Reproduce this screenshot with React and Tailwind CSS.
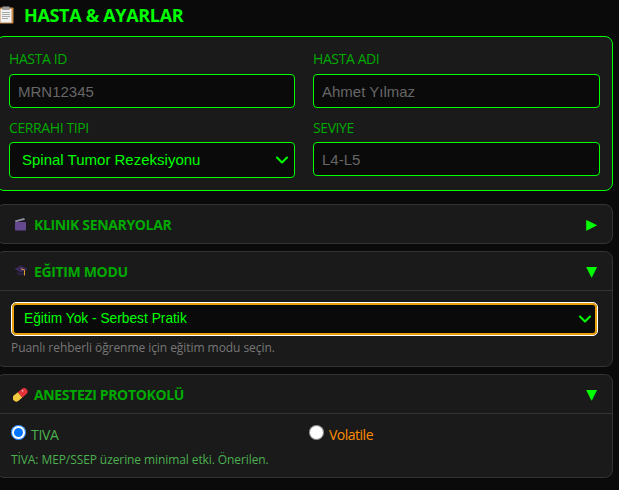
import React from "react";
import { ChevronDown } from "lucide-react";

const segoe = "font-['Open_Sans',sans-serif]";
const arial = "font-['Liberation_Sans',sans-serif]";

const ClipboardIcon = () => (
  <svg width="16" height="18" viewBox="0 0 16 18" className="shrink-0">
    <rect x="0.5" y="1.5" width="15" height="16" rx="1" fill="#c98a4b" />
    <rect x="2.5" y="3" width="11" height="13.5" fill="#f2f2f2" />
    <rect x="4.5" y="0.5" width="7" height="3.5" fill="#9a9a9a" />
    <path d="M4 6.5h8M4 8.5h8M4 10.5h8M4 12.5h6" stroke="#a9a9a9" strokeWidth="1" />
  </svg>
);

const ClapperIcon = () => (
  <svg width="13" height="14" viewBox="0 0 13 14" className="shrink-0">
    <rect x="1" y="5" width="11" height="8.5" rx="1" fill="#64498f" />
    <path d="M1 3.5L10 1l1 1.8L1.5 5.2z" fill="#8f8fa3" />
  </svg>
);

const CapIcon = () => (
  <svg width="14" height="14" viewBox="0 0 14 14" className="shrink-0">
    <path d="M0.5 5L7 1.5 13.5 5 7 8.5z" fill="#3c2a5e" />
    <path d="M3 7.5v2.5c2 1.8 6 1.8 8 0V7.5L7 9.5z" fill="#2d2046" />
    <path d="M7 4.8L10.5 6v5.5" stroke="#e0a030" strokeWidth="1" fill="none" />
  </svg>
);

const PillIcon = () => (
  <svg width="15" height="15" viewBox="0 0 15 15" className="shrink-0">
    <g transform="rotate(-40 7.5 7.5)">
      <path d="M2 4h5v7H2a3.5 3.5 0 0 1 0-7z" fill="#f4c93f" />
      <path d="M7 4h5a3.5 3.5 0 0 1 0 7H7z" fill="#e5313a" />
      <circle cx="11.5" cy="6" r="0.8" fill="#ffd5d5" />
    </g>
  </svg>
);

const FieldLabel = ({ children, tight }) => (
  <label className={`block ${tight ? "h-[24px]" : "h-[25px]"} text-[14px] leading-[20px] tracking-[-0.4px] text-[#00aa00] ${segoe}`}>{children}</label>
);

const Field = ({ label, value, tight }) => (
  <div>
    <FieldLabel tight={tight}>{label}</FieldLabel>
    <input
      readOnly
      value={value}
      className={`block w-full h-[34px] px-[8px] bg-[#0a0a0a] border border-[#00ff00] rounded text-[15px] text-[#666666] outline-none ${arial}`}
    />
  </div>
);

const SectionHeader = ({ icon, title, arrow, border }) => (
  <div className={`flex items-center justify-between pl-[16px] pr-[15px] ${border ? "border-b border-[#333333] h-[39px]" : "h-[38px]"}`}>
    <div className="flex items-center gap-[6px]">
      <span className="flex justify-center w-[15px]">{icon}</span>
      <span className={`text-[14px] font-bold tracking-[-0.35px] text-[#00aa00] ${segoe}`}>{title}</span>
    </div>
    <span className="text-[14px] leading-none text-[#00ff00] font-['DejaVu_Sans',sans-serif]">{arrow}</span>
  </div>
);

export default function App() {
  return (
    <div className="min-h-[490px] bg-[#0a0a0a] overflow-hidden">
      <div className="-ml-[4px] w-[617px]">
        <div className="flex items-center gap-[10px] h-[36px] pb-[6px] pl-[2px]">
          <ClipboardIcon />
          <h2 className={`text-[18px] font-bold tracking-[-0.33px] text-[#00ff00] ${segoe}`}>HASTA &amp; AYARLAR</h2>
        </div>

        <div className="p-[12px] bg-[#1a1a1a] border border-[#00ff00] rounded-lg grid grid-cols-[286px_287px] gap-x-[18px] gap-y-[10px]">
          <Field label="HASTA ID" value="MRN12345" />
          <Field label="HASTA ADI" value="Ahmet Yılmaz" />
          <div>
            <FieldLabel tight>CERRAHI TIPI</FieldLabel>
            <div className="relative">
              <select className={`block w-full h-[36px] pl-[12px] pr-[30px] appearance-none bg-[#0a0a0a] border border-[#00ff00] rounded text-[15px] text-[#00ff00] outline-none ${arial}`}>
                <option>Spinal Tumor Rezeksiyonu</option>
              </select>
              <ChevronDown size={20} strokeWidth={2.5} className="absolute right-[3px] top-[8px] text-[#00ff00]" />
            </div>
          </div>
          <Field label="SEVIYE" value="L4-L5" tight />
        </div>

        <div className="mt-[13px] bg-[#1a1a1a] border border-[#333333] rounded-lg">
          <SectionHeader icon={<ClapperIcon />} title="KLINIK SENARYOLAR" arrow="▶" />
        </div>

        <div className="mt-[7px] bg-[#1a1a1a] border border-[#333333] rounded-lg">
          <SectionHeader icon={<CapIcon />} title="EĞITIM MODU" arrow="▼" border />
          <div className="px-[15px] pt-[12px] pb-[10px]">
            <div className="relative">
              <select className={`block w-full h-[32px] pl-[10px] pr-[30px] appearance-none bg-[#0a0a0a] border-2 border-[#e89f0c] rounded outline-1 outline-white text-[13.75px] text-[#00ff00] ${arial}`}>
                <option>Eğitim Yok - Serbest Pratik</option>
              </select>
              <ChevronDown size={20} strokeWidth={2.5} className="absolute right-[2px] top-[6px] text-[#00ff00]" />
            </div>
            <p className={`-ml-px mt-[5px] text-[12px] leading-[16px] tracking-[-0.06px] text-[#777777] ${segoe}`}>Puanlı rehberli öğrenme için eğitim modu seçin.</p>
          </div>
        </div>

        <div className="mt-[7px] bg-[#1a1a1a] border border-[#333333] rounded-lg">
          <SectionHeader icon={<PillIcon />} title="ANESTEZI PROTOKOLÜ" arrow="▼" border />
          <div className="px-[15px] pt-[10px] pb-[9px]">
            <div className="grid grid-cols-[298px_1fr]">
              <label className={`flex items-center gap-[5px] text-[14px] tracking-[-0.3px] text-[#4caf50] ${segoe}`}>
                <input type="radio" name="anestezi" defaultChecked className="m-0 -ml-px mb-[5px] size-[15px]" />
                TIVA
              </label>
              <label className={`flex items-center gap-[5px] text-[14px] tracking-[-0.5px] text-[#ff8c00] ${segoe}`}>
                <input type="radio" name="anestezi" className="m-0 -ml-px mb-[5px] size-[15px]" />
                Volatile
              </label>
            </div>
            <p className={`-ml-px mt-[7px] text-[12px] leading-[16px] tracking-[-0.09px] text-[#4caf50] ${segoe}`}>TİVA: MEP/SSEP üzerine minimal etki. Önerilen.</p>
          </div>
        </div>
      </div>
    </div>
  );
}
